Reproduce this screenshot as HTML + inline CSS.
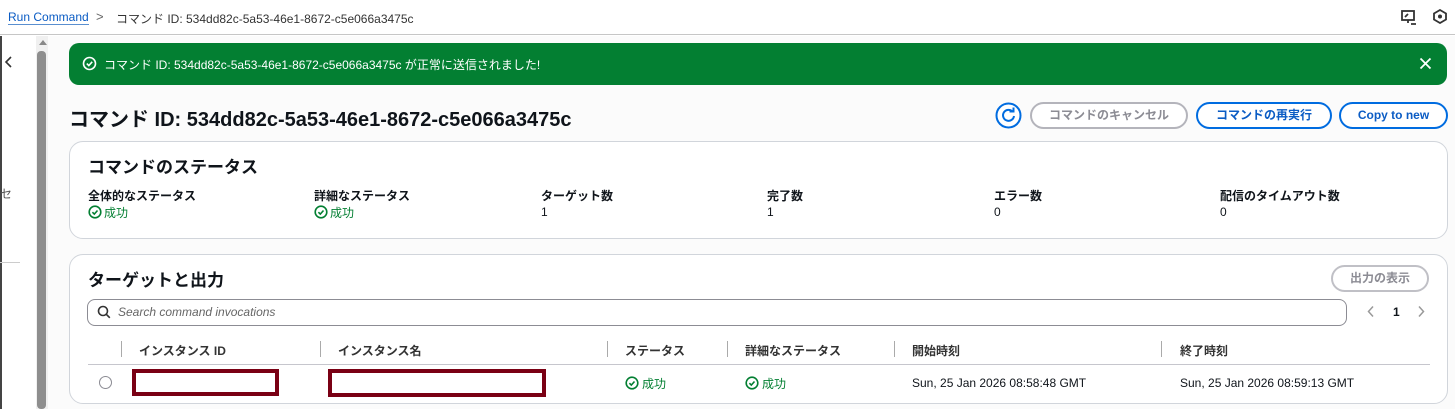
<!DOCTYPE html>
<html><head><meta charset="utf-8"><style>
*{margin:0;padding:0;box-sizing:border-box}
html,body{width:1455px;height:409px;overflow:hidden}
body{background:#fff;font-family:"Liberation Sans","Noto Sans CJK JP",sans-serif;color:#0f141a;position:relative;font-size:12px}
.a{position:absolute;white-space:nowrap}
.card{position:absolute;border:1px solid #d1d5db;border-radius:14px;background:#fff}
.lbl{font-weight:bold;font-size:12px;color:#0f141a}
.ok{color:#037f32;font-size:12px}
.btn{position:absolute;height:27px;border:2px solid #006ce0;border-radius:14px;color:#0b5cc4;font-weight:bold;font-size:12px;text-align:center;line-height:23px;background:#fff}
.th{font-weight:bold;font-size:12px;color:#333}
.sep{position:absolute;width:1px;height:16px;background:#aaa;top:341px}
</style></head><body>
<div class="a" style="left:0;top:0;width:1455px;height:35px;border-bottom:1px solid #c6c6c6"></div>
<div class="a" style="left:8px;top:10px;font-size:12px;color:#0b5cc4;border-bottom:1px solid #5a8fd0">Run Command</div>
<div class="a" style="left:96px;top:9px;font-size:13px;color:#666">&gt;</div>
<div class="a" style="left:116px;top:10px;font-size:12px;color:#333">コマンド ID: 534dd82c-5a53-46e1-8672-c5e066a3475c</div>
<svg class="a" style="left:1400px;top:9px" width="18" height="16" viewBox="0 0 18 16"><rect x="2" y="2" width="12" height="9" fill="none" stroke="#333" stroke-width="1.8"/><path d="M5 8l3-3M8 11v3M11 15h5" stroke="#333" stroke-width="1.8"/></svg>
<svg class="a" style="left:1433px;top:9px" width="14" height="15" viewBox="0 0 14 15"><path d="M7 1l6 3.5v6L7 14 1 10.5v-6z" fill="none" stroke="#333" stroke-width="1.8"/><circle cx="7" cy="7.5" r="2" fill="#333"/></svg>
<div class="a" style="left:0;top:36px;width:2px;height:373px;background:#444"></div>
<svg class="a" style="left:4px;top:55px" width="10" height="14" viewBox="0 0 10 14"><path d="M7 2L2 7l5 5" fill="none" stroke="#333" stroke-width="1.6"/></svg>
<div class="a" style="left:0;top:185px;font-size:12px;color:#555">セ</div>
<div class="a" style="left:0;top:262px;width:20px;height:1px;background:#ccc"></div>
<div class="a" style="left:36px;top:36px;width:12px;height:373px;background:#f0f0f0"></div>
<div class="a" style="left:37px;top:40px;width:0;height:0;border-left:4px solid transparent;border-right:4px solid transparent;border-bottom:5px solid #888;margin-left:2px"></div>
<div class="a" style="left:37px;top:51px;width:9px;height:358px;background:#8e8e8e;border-radius:4px"></div>
<div class="a" style="left:48px;top:36px;width:1407px;height:373px;background:#fbfbfb"></div>

<div class="a" style="left:69px;top:43px;width:1378px;height:42px;background:#037f32;border-radius:10px"></div>
<svg class="a" style="left:82px;top:56px" width="15" height="15" viewBox="0 0 15 15"><circle cx="7.5" cy="7.5" r="6" fill="none" stroke="#fff" stroke-width="1.6"/><path d="M4.8 7.6l2 2 3.4-3.8" fill="none" stroke="#fff" stroke-width="1.6"/></svg>
<div class="a" style="left:104px;top:56px;color:#fff;font-size:12px">コマンド ID: 534dd82c-5a53-46e1-8672-c5e066a3475c が正常に送信されました!</div>
<svg class="a" style="left:1419px;top:57px" width="13" height="13" viewBox="0 0 13 13"><path d="M1.5 1.5l10 10M11.5 1.5l-10 10" stroke="#fff" stroke-width="1.8"/></svg>

<div class="a" style="left:69px;top:103px;font-size:20px;font-weight:bold">コマンド ID: 534dd82c-5a53-46e1-8672-c5e066a3475c</div>
<svg class="a" style="left:995px;top:102px" width="27" height="27" viewBox="0 0 27 27"><circle cx="13.5" cy="13.5" r="12" fill="#fff" stroke="#006ce0" stroke-width="2"/><path d="M17.5 9.5A5.5 5.5 0 1 0 19 14" fill="none" stroke="#006ce0" stroke-width="2"/><path d="M14.5 9.5h4v-4" fill="none" stroke="#006ce0" stroke-width="2"/></svg>
<div class="btn" style="left:1030px;top:102px;width:158px;border-color:#b4b4bb;color:#8c8c94">コマンドのキャンセル</div>
<div class="btn" style="left:1196px;top:102px;width:136px">コマンドの再実行</div>
<div class="btn" style="left:1339px;top:102px;width:109px">Copy to new</div>

<div class="card" style="left:69px;top:141px;width:1379px;height:98px"></div>
<div class="a" style="left:88px;top:153px;font-size:17px;font-weight:bold">コマンドのステータス</div>
<div class="a lbl" style="left:88px;top:187px">全体的なステータス</div>
<div class="a lbl" style="left:314px;top:187px">詳細なステータス</div>
<div class="a lbl" style="left:541px;top:187px">ターゲット数</div>
<div class="a lbl" style="left:767px;top:187px">完了数</div>
<div class="a lbl" style="left:994px;top:187px">エラー数</div>
<div class="a lbl" style="left:1220px;top:187px">配信のタイムアウト数</div>
<svg class="a" style="left:88px;top:205px" width="14" height="14" viewBox="0 0 14 14"><circle cx="7" cy="7" r="5.8" fill="#fff" stroke="#037f32" stroke-width="1.6"/><path d="M4.4 7.2l1.9 1.9 3.2-3.6" fill="none" stroke="#037f32" stroke-width="1.6"/></svg>
<div class="a ok" style="left:104px;top:204px">成功</div>
<svg class="a" style="left:314px;top:205px" width="14" height="14" viewBox="0 0 14 14"><circle cx="7" cy="7" r="5.8" fill="#fff" stroke="#037f32" stroke-width="1.6"/><path d="M4.4 7.2l1.9 1.9 3.2-3.6" fill="none" stroke="#037f32" stroke-width="1.6"/></svg>
<div class="a ok" style="left:330px;top:204px">成功</div>
<div class="a" style="left:541px;top:205px">1</div>
<div class="a" style="left:767px;top:205px">1</div>
<div class="a" style="left:994px;top:205px">0</div>
<div class="a" style="left:1220px;top:205px">0</div>

<div class="card" style="left:69px;top:254px;width:1379px;height:150px"></div>
<div class="a" style="left:88px;top:266px;font-size:17px;font-weight:bold">ターゲットと出力</div>
<div class="btn" style="left:1331px;top:265px;width:98px;border-color:#c0c0c6;color:#8c8c94">出力の表示</div>
<div class="a" style="left:87px;top:299px;width:1260px;height:27px;border:1px solid #8c8c94;border-radius:8px;background:#fff"></div>
<svg class="a" style="left:97px;top:305px" width="14" height="14" viewBox="0 0 14 14"><circle cx="6" cy="6" r="4.5" fill="none" stroke="#333" stroke-width="1.6"/><path d="M9.3 9.3l3.5 3.5" stroke="#333" stroke-width="1.6"/></svg>
<div class="a" style="left:118px;top:305px;font-style:italic;color:#666;font-size:12px">Search command invocations</div>
<svg class="a" style="left:1367px;top:305px" width="8" height="13" viewBox="0 0 8 13"><path d="M6 1.5L1.5 6.5 6 11.5" fill="none" stroke="#999" stroke-width="1.5"/></svg>
<div class="a" style="left:1393px;top:305px;font-weight:bold;font-size:12px">1</div>
<svg class="a" style="left:1417px;top:305px" width="8" height="13" viewBox="0 0 8 13"><path d="M2 1.5l4.5 5L2 11.5" fill="none" stroke="#999" stroke-width="1.5"/></svg>
<div class="sep" style="left:121px"></div>
<div class="sep" style="left:320px"></div>
<div class="sep" style="left:607px"></div>
<div class="sep" style="left:727px"></div>
<div class="sep" style="left:894px"></div>
<div class="sep" style="left:1161px"></div>
<div class="a th" style="left:139px;top:342px">インスタンス ID</div>
<div class="a th" style="left:338px;top:342px">インスタンス名</div>
<div class="a th" style="left:625px;top:342px">ステータス</div>
<div class="a th" style="left:745px;top:342px">詳細なステータス</div>
<div class="a th" style="left:912px;top:342px">開始時刻</div>
<div class="a th" style="left:1180px;top:342px">終了時刻</div>
<div class="a" style="left:88px;top:364px;width:1342px;height:1px;background:#c6c6cd"></div>
<div class="a" style="left:99px;top:376px;width:13px;height:13px;border:1px solid #8c8c94;border-radius:50%"></div>
<div class="a" style="left:132px;top:369px;width:147px;height:27px;border:4px solid #7a0014;background:#fff"></div>
<div class="a" style="left:328px;top:369px;width:218px;height:28px;border:4px solid #7a0014;background:#fff"></div>
<svg class="a" style="left:625px;top:376px" width="14" height="14" viewBox="0 0 14 14"><circle cx="7" cy="7" r="5.8" fill="#fff" stroke="#037f32" stroke-width="1.6"/><path d="M4.4 7.2l1.9 1.9 3.2-3.6" fill="none" stroke="#037f32" stroke-width="1.6"/></svg>
<div class="a ok" style="left:642px;top:375px">成功</div>
<svg class="a" style="left:745px;top:376px" width="14" height="14" viewBox="0 0 14 14"><circle cx="7" cy="7" r="5.8" fill="#fff" stroke="#037f32" stroke-width="1.6"/><path d="M4.4 7.2l1.9 1.9 3.2-3.6" fill="none" stroke="#037f32" stroke-width="1.6"/></svg>
<div class="a ok" style="left:762px;top:375px">成功</div>
<div class="a" style="left:912px;top:376px">Sun, 25 Jan 2026 08:58:48 GMT</div>
<div class="a" style="left:1180px;top:376px">Sun, 25 Jan 2026 08:59:13 GMT</div>
</body></html>
